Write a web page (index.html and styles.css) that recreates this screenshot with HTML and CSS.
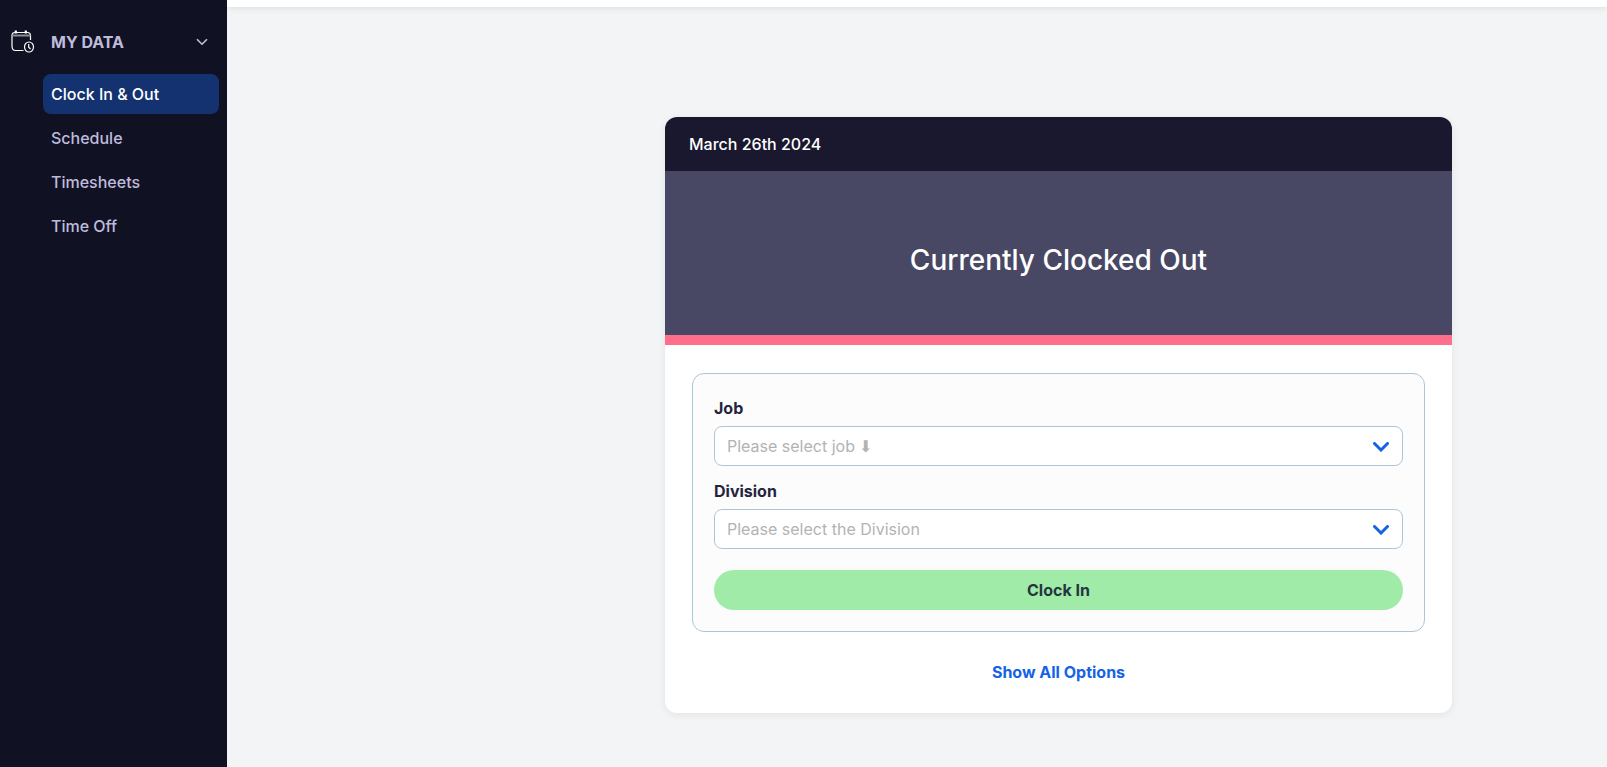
FILE: index.html
```html
<!doctype html>
<html lang="en">
<head>
	<meta charset="utf-8">
	<title>Clock In &amp; Out</title>
	<link rel="stylesheet" href="styles.css">
</head>
<body>
	<nav class="sidebar">
		<button type="button" class="menu-head">
			<svg class="menu-icon" width="24" height="24" viewBox="0 0 24 24" fill="none" stroke="#fff" stroke-width="1.2">
				<path d="M12.500 20.500H4.500C2.300 20.500 1 19 1 16V5.500C1 3.500 2 2.500 4 2.500H16.500C18.500 2.500 19.500 3.500 19.500 5.500V10"/>
				<path d="M1 5.500H19.500" stroke="#8d8d9b" stroke-width="2"/>
				<path d="M4.800 .5V3.500M14.800 .5V3.500" stroke-width="2.200"/>
				<ellipse cx="18" cy="17" rx="4.500" ry="5"/>
				<path d="M17.700 14V17.200L19.500 19"/>
			</svg>
			<span>MY DATA</span>
			<svg class="menu-arrow" width="12" height="8" viewBox="0 0 12 8" fill="none" stroke="#c5c2e0" stroke-width="1.600">
				<path d="M1 1.200L6 6.200L11 1.200"/>
			</svg>
		</button>
		<ul class="menu">
			<li><a class="active" href="#">Clock In &amp; Out</a></li>
			<li><a href="#">Schedule</a></li>
			<li><a href="#">Timesheets</a></li>
			<li><a href="#">Time Off</a></li>
		</ul>
	</nav>
	<div class="page">
		<header class="topbar"></header>
		<main class="content">
			<section class="card">
				<div class="card-date">March 26th 2024</div>
				<h1 class="card-status">Currently Clocked Out</h1>
				<div class="card-body">
					<form class="clock-form">
						<label for="job">Job</label>
						<div class="select-wrap">
							<select id="job">
								<option>Please select job ⬇</option>
							</select>
							<svg width="16" height="10" viewBox="0 0 16 10" fill="none" stroke="#1463e6" stroke-width="3" stroke-linecap="round">
								<path d="M1.500 1.500L8 8L14.500 1.500"/>
							</svg>
						</div>
						<label for="division">Division</label>
						<div class="select-wrap">
							<select id="division">
								<option>Please select the Division</option>
							</select>
							<svg width="16" height="10" viewBox="0 0 16 10" fill="none" stroke="#1463e6" stroke-width="3" stroke-linecap="round">
								<path d="M1.500 1.500L8 8L14.500 1.500"/>
							</svg>
						</div>
						<button type="button" class="clock-btn">Clock In</button>
					</form>
					<a class="show-all" href="#">Show All Options</a>
				</div>
			</section>
		</main>
	</div>
</body>
</html>
```
FILE: styles.css
```css
*{margin: 0;padding: 0;box-sizing: border-box;}
body{
	display: flex;
	min-height: 100vh;
	background: #f3f4f6;
	color: #24243e;
	font: 16px/26px Inter, "Liberation Sans", sans-serif;
}
button, select{font: inherit;}
a{text-decoration: none;}

/* sidebar */
.sidebar{
	flex: none;
	width: 227px;
	padding: 22px 8px 0 11px;
	background: #111124;
}
.menu-head{
	display: flex;
	align-items: center;
	width: 100%;
	height: 40px;
	padding-right: 11px;
	border: 0;
	background: none;
	color: #bfbcdb;
	font-weight: 700;
	cursor: pointer;
}
.menu-icon{margin-right: 16px;}
.menu-arrow{margin-left: auto;}
.menu{
	display: grid;
	gap: 4px;
	margin: 12px 0 0 32px;
	list-style: none;
}
.menu a{
	display: block;
	padding: 7px 8px;
	border-radius: 8px;
	color: #bfbcdb;
	font-weight: 500;
}
.menu a.active{
	background: #143270;
	color: #fff;
}

/* page */
.page{flex: 1;}
.topbar{
	height: 7px;
	background: #fff;
	box-shadow: 0 1px 6px rgba(0,0,0,.1);
}
.content{padding: 110px 0 24px 283px;}
.card{
	width: 787px;
	max-width: 100%;
	margin: 0 auto;
	border-radius: 12px;
	overflow: hidden;
	background: #fff;
	box-shadow: 0 2px 8px rgba(0,0,0,.07);
}
.card-date{
	padding: 14px 24px;
	background: #19182f;
	color: #fff;
	font-weight: 500;
}
.card-status{
	padding: 76px 24px 62px;
	border-bottom: 10px solid #ff6f8b;
	background: #484864;
	color: #fff;
	font-size: 28px;
	font-weight: 500;
	text-align: center;
}
.card-body{
	padding: 28px 27px;
	text-align: center;
}

/* form */
.clock-form{
	display: grid;
	padding: 21px;
	border: 1px solid #abc6d9;
	border-radius: 12px;
	background: #fcfcfc;
	text-align: left;
}
.clock-form label{
	margin-bottom: 5px;
	font-weight: 700;
}
.select-wrap{
	position: relative;
	margin-bottom: 12px;
}
.select-wrap select{
	display: block;
	width: 100%;
	height: 40px;
	padding: 0 40px 0 12px;
	border: 1px solid #abc6d9;
	border-radius: 8px;
	background: #fff;
	color: #b3b3b3;
	appearance: none;
}
.select-wrap svg{
	position: absolute;
	top: 16px;
	right: 14px;
	pointer-events: none;
}
.clock-btn{
	height: 40px;
	margin-top: 9px;
	border: 0;
	border-radius: 20px;
	background: #a1eba8;
	color: #24363f;
	font-weight: 700;
	cursor: pointer;
}
.show-all{
	display: block;
	margin-top: 27px;
	color: #1463e6;
	font-weight: 700;
}
```
